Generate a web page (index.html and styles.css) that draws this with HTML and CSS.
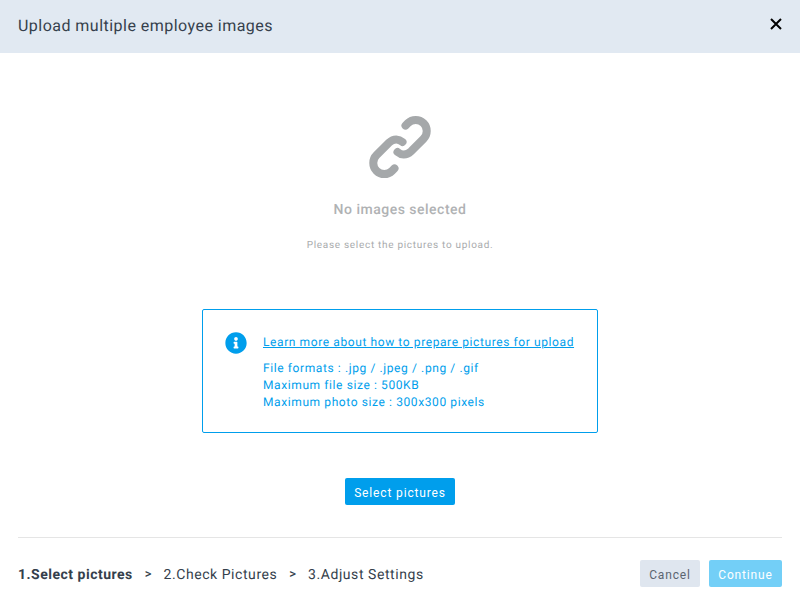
FILE: index.html
```html
<!DOCTYPE html>
<html>
<head>
  <title>Upload multiple employee images</title>
  <link rel="stylesheet" href="styles.css">
</head>
<body>
  <div class="modal">
    <header class="modal-header">
      <h1>Upload multiple employee images</h1>
      <button class="close-btn" aria-label="Close">
        <svg width="12" height="12" viewBox="0 0 12 12"><path d="M1 1L11 11M11 1L1 11" fill="none" stroke="#000" stroke-width="2"/></svg>
      </button>
    </header>

    <div class="empty-state">
      <svg class="link-icon" width="64" height="64" viewBox="0 0 64 64">
        <path d="M37.5 10.6L39.9 8.2A11 11 0 0 1 55.5 23.8L43 36.3C38 41 33 40 29.5 37" fill="none" stroke="#a5a8aa" stroke-width="8" stroke-linecap="round"/>
        <path d="M26.5 53.4L24.1 55.8A11 11 0 0 1 8.5 40.2L21 27.7C26 23 31 24 34.5 27" fill="none" stroke="#a5a8aa" stroke-width="8" stroke-linecap="round"/>
      </svg>
      <h2>No images selected</h2>
      <p>Please select the pictures to upload.</p>
    </div>

    <div class="info-box">
      <svg class="info-icon" width="22" height="22" viewBox="0 0 512 512"><path fill="#009eec" d="M256 8C119.043 8 8 119.083 8 256c0 136.997 111.043 248 248 248s248-111.003 248-248C504 119.083 392.957 8 256 8zm0 110c23.196 0 42 18.804 42 42s-18.804 42-42 42-42-18.804-42-42 18.804-42 42-42zm56 254c0 6.627-5.373 12-12 12h-88c-6.627 0-12-5.373-12-12v-24c0-6.627 5.373-12 12-12h12v-64h-12c-6.627 0-12-5.373-12-12v-24c0-6.627 5.373-12 12-12h64c6.627 0 12 5.373 12 12v100h12c6.627 0 12 5.373 12 12v24z"/></svg>
      <div class="info-text">
        <a href="#">Learn more about how to prepare pictures for upload</a>
        <ul>
          <li>File formats : .jpg / .jpeg / .png / .gif</li>
          <li>Maximum file size : 500KB</li>
          <li>Maximum photo size : 300x300 pixels</li>
        </ul>
      </div>
    </div>

    <div class="select-row">
      <button class="btn btn-primary">Select pictures</button>
    </div>

    <footer class="modal-footer">
      <div class="steps">
        <span class="step active">1.Select pictures</span>
        <span class="sep">&gt;</span>
        <span class="step">2.Check Pictures</span>
        <span class="sep">&gt;</span>
        <span class="step">3.Adjust Settings</span>
      </div>
      <div class="actions">
        <button class="btn btn-cancel">Cancel</button>
        <button class="btn btn-continue">Continue</button>
      </div>
    </footer>
  </div>
</body>
</html>
```

FILE: styles.css
```css
:root {
  --primary-color: #009eec;
  --text-color: #353f4c;
  --header-bg: #e1e9f2;
}

body {
  margin: 0;
  background-color: #fff;
  font-family: Roboto, sans-serif;
  color: var(--text-color);
  text-rendering: geometricPrecision;
}

.modal {
  width: 800px;
  height: 605px;
  display: flex;
  flex-direction: column;
}

.modal-header {
  height: 53px;
  padding: 0 18px;
  box-sizing: border-box;
  display: flex;
  align-items: center;
  justify-content: space-between;
  background-color: var(--header-bg);
}

h1 {
  margin: 0 0 2px;
  font-size: 16px;
  font-weight: 400;
  letter-spacing: 0.47px;
}

.close-btn {
  padding: 0;
  border: none;
  background: transparent;
  cursor: pointer;
  display: flex;
  margin-top: -5px;
}

.empty-state {
  padding-top: 62px;
  text-align: center;
}

.link-icon {
  display: block;
  margin: 0 auto;
}

h2 {
  margin: 23px 0 0;
  font-size: 14px;
  line-height: 16px;
  font-weight: 500;
  letter-spacing: 0.5px;
  color: #b0b2b4;
}

.empty-state p {
  margin: 21px 0 0;
  font-size: 10px;
  line-height: 14px;
  letter-spacing: 0.7px;
  color: #a9abad;
}

.info-box {
  width: 396px;
  height: 124px;
  box-sizing: border-box;
  margin: 56px auto 0;
  padding: 22px 22px 0;
  display: flex;
  gap: 16px;
  border: 1px solid var(--primary-color);
  border-radius: 2px;
  color: var(--primary-color);
  font-size: 12px;
  letter-spacing: 0.6px;
}

.info-icon {
  flex: none;
}

.info-text {
  padding-top: 2px;
}

.info-text a {
  display: block;
  line-height: 17px;
  color: var(--primary-color);
  text-decoration: underline;
}

.info-text ul {
  margin: 9px 0 0;
  padding: 0;
  list-style: none;
}

.info-text li {
  line-height: 17px;
}

.select-row {
  margin-top: 45px;
  text-align: center;
}

.btn {
  height: 27px;
  padding: 2px 0 0;
  border: none;
  border-radius: 2px;
  font-family: Roboto, sans-serif;
  font-size: 12px;
  letter-spacing: 0.85px;
  cursor: pointer;
}

.btn-primary {
  width: 110px;
  background-color: var(--primary-color);
  color: #fff;
}

.modal-footer {
  margin: 32px 18px 0;
  padding-top: 22px;
  display: flex;
  justify-content: space-between;
  align-items: center;
  border-top: 1px solid #e5e5e5;
}

.steps {
  display: flex;
  align-items: center;
  gap: 12px;
  padding-top: 2px;
  font-size: 14px;
  letter-spacing: 0.56px;
}

.step.active {
  font-weight: 700;
  letter-spacing: 0.5px;
}

.sep {
  font-size: 13px;
  font-weight: 500;
  letter-spacing: 0;
}

.actions {
  display: flex;
  gap: 9px;
}

.btn-cancel {
  width: 60px;
  background-color: #dfe6ef;
  color: #5b6571;
}

.btn-continue {
  width: 73px;
  background-color: #73cff7;
  color: #fff;
}
```
